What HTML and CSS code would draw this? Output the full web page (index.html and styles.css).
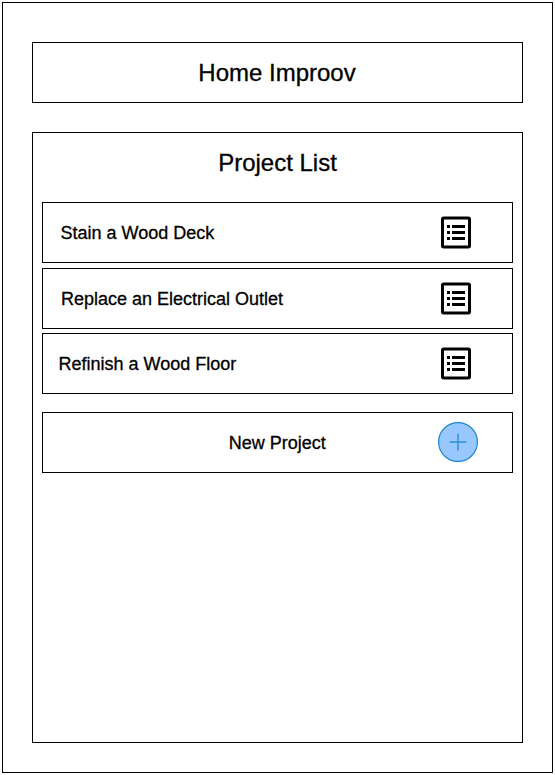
FILE: index.html
```html
<!DOCTYPE html>
<html lang="en">
<head>
<meta charset="utf-8">
<title>Home Improov</title>
<link rel="stylesheet" href="styles.css">
</head>
<body>
<svg width="0" height="0" class="defs">
  <symbol id="list-icon" viewBox="0 0 30 33">
    <rect x="1.5" y="2" width="27" height="29" rx="1.2" fill="none" stroke="#000" stroke-width="3"/>
    <path d="M6 9h3v3h-3zM6 15h3v3h-3zM6 21h3v3h-3zM11 9h13v3h-13zM11 15h13v3h-13zM11 21h13v3h-13z"/>
  </symbol>
</svg>
<div class="screen">
  <header class="header"><h1 class="title">Home Improov</h1></header>
  <main class="panel">
    <h2 class="title list-title">Project List</h2>
    <div class="row stain"><span class="name">Stain a Wood Deck</span><svg class="icon"><use href="#list-icon"/></svg></div>
    <div class="row replace"><span class="name">Replace an Electrical Outlet</span><svg class="icon"><use href="#list-icon"/></svg></div>
    <div class="row refinish"><span class="name">Refinish a Wood Floor</span><svg class="icon"><use href="#list-icon"/></svg></div>
    <div class="row new"><span class="name">New Project</span>
      <svg class="add" viewBox="0 0 40 40"><circle cx="20" cy="20" r="19.4" fill="#99c7ff" stroke="#1f86d2" stroke-width="1.2"/><path d="M11.5 20h17M20 11.5v17" stroke="#2e8fd8" stroke-width="1.5" fill="none"/></svg>
    </div>
  </main>
</div>
</body>
</html>
```
FILE: styles.css
```css
* { box-sizing: border-box; }
body {
  margin: 0;
  padding: 2px;
  background: #fff;
  color: #000;
  font-family: "Liberation Sans", Arial, sans-serif;
}
.defs { display: none; }
.screen {
  width: 551px;
  height: 771px;
  padding: 39px 29px 29px;
  border: 1px solid #000;
}
.header {
  height: 61px;
  margin-bottom: 29px;
  padding-right: 1px;
  border: 1px solid #000;
}
.title {
  margin: 0;
  font-size: 24px;
  font-weight: 400;
  line-height: 60px;
  text-align: center;
  -webkit-text-stroke: 0.3px #000;
}
.panel {
  height: 611px;
  padding: 0 9px;
  border: 1px solid #000;
}
.list-title { height: 69px; }
.row {
  display: flex;
  align-items: center;
  height: 61px;
  padding: 0 41px 0 18px;
  border: 1px solid #000;
}
.name {
  flex: 1;
  font-size: 18px;
  line-height: 24px;
  white-space: nowrap;
  -webkit-text-stroke: 0.3px #000;
}
.icon { width: 30px; height: 33px; }
.stain { padding-left: 17.5px; }
.replace { margin-top: 5px; }
.refinish { margin-top: 4px; padding-left: 15.5px; }
.new { margin-top: 18px; padding: 0 34px 0 73.5px; }
.new .name { text-align: center; }
.add { width: 40px; height: 40px; margin-bottom: 1px; }
```
